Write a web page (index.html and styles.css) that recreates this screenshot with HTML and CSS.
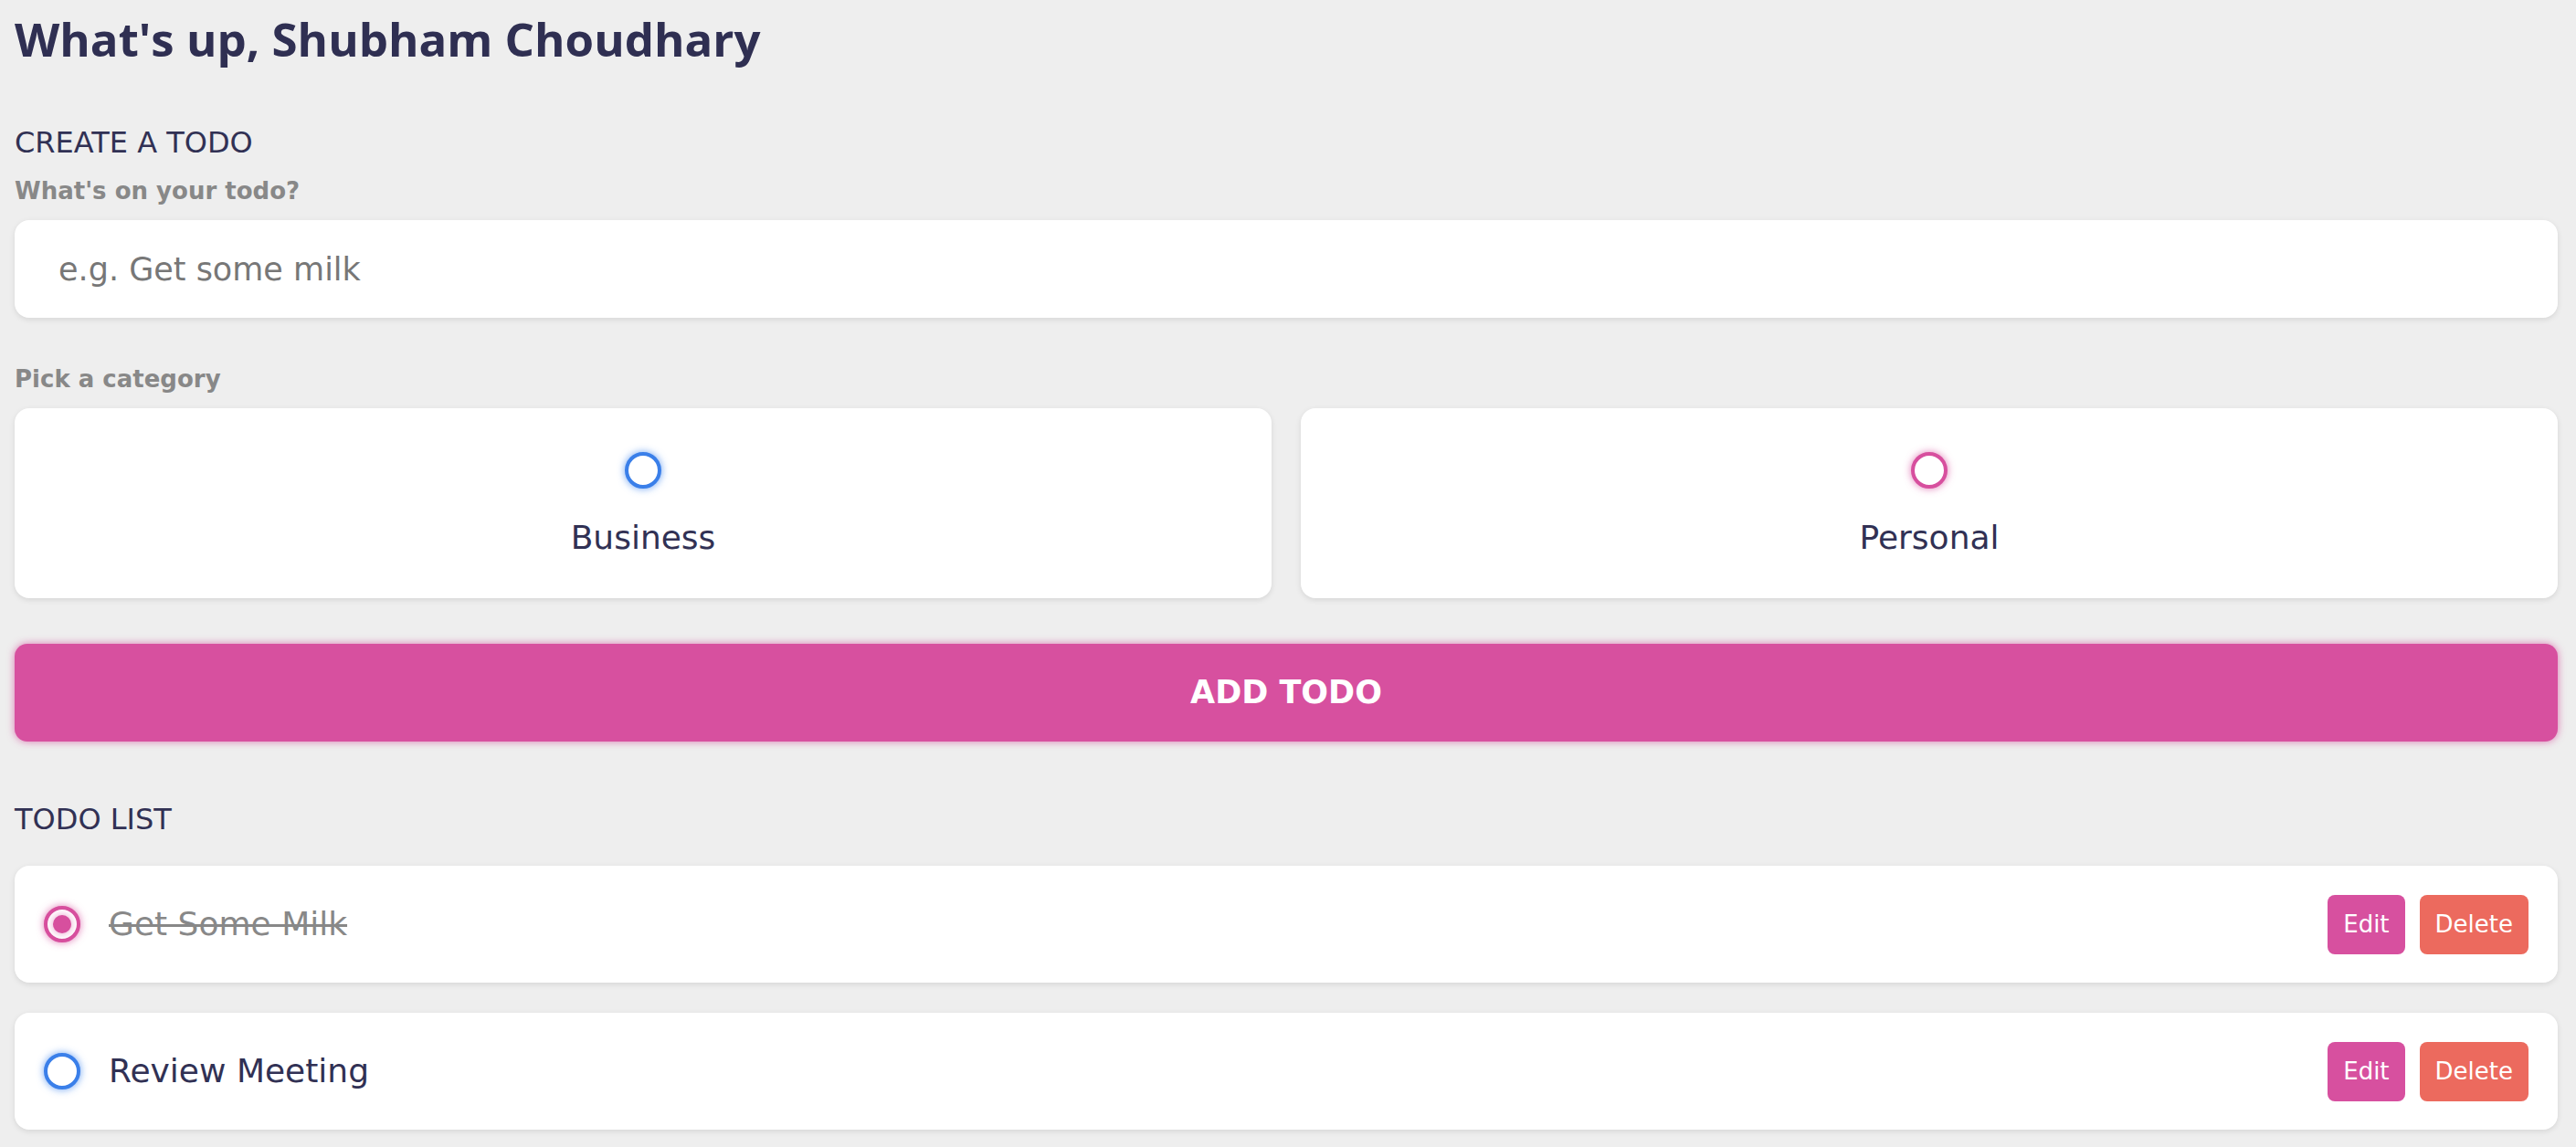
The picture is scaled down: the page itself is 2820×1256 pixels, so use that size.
FILE: index.html
```html
<!DOCTYPE html>
<html lang="en">
<head>
<meta charset="utf-8">
<title>Todo</title>
<link rel="stylesheet" href="styles.css">
</head>
<body>
<main class="app">
  <section class="greeting">
    <h2 class="title">What's up, Shubham Choudhary</h2>
  </section>

  <section class="create-todo">
    <h3 class="section-title">CREATE A TODO</h3>
    <form class="create-form">
      <h4 class="label label-todo">What's on your todo?</h4>
      <input class="todo-input" type="text" placeholder="e.g. Get some milk">
      <h4 class="label label-cat">Pick a category</h4>
      <div class="options">
        <label class="option">
          <span class="bubble business"></span>
          <span class="option-name">Business</span>
        </label>
        <label class="option">
          <span class="bubble personal"></span>
          <span class="option-name">Personal</span>
        </label>
      </div>
      <button type="button" class="add-btn">Add todo</button>
    </form>
  </section>

  <section class="todo-list">
    <h3 class="section-title list-title">TODO LIST</h3>
    <div class="list">
      <div class="todo-item done">
        <span class="bubble personal checked"></span>
        <span class="todo-content">Get Some Milk</span>
        <div class="actions">
          <button type="button" class="btn edit">Edit</button>
          <button type="button" class="btn delete">Delete</button>
        </div>
      </div>
      <div class="todo-item">
        <span class="bubble business"></span>
        <span class="todo-content">Review Meeting</span>
        <div class="actions">
          <button type="button" class="btn edit">Edit</button>
          <button type="button" class="btn delete">Delete</button>
        </div>
      </div>
    </div>
  </section>
</main>
</body>
</html>
```

FILE: styles.css
```css
* {
  margin: 0;
  padding: 0;
  box-sizing: border-box;
}

html, body {
  background: #eeeeee;
}

body {
  font-family: "DejaVu Sans", sans-serif;
  color: #313154;
}

.app {
  padding: 0 20px 0 16px;
}

.greeting {
  padding-top: 16px;
}

.title {
  font-family: "Open Sans", sans-serif;
  font-weight: 700;
  font-size: 51px;
  line-height: 52px;
  color: #2f2f52;
}

.section-title {
  font-weight: 400;
  font-size: 32px;
  line-height: 32px;
  color: #313154;
}

.create-todo {
  margin-top: 72px;
}

.label {
  font-weight: 700;
  font-size: 26px;
  line-height: 26px;
  color: #888888;
}

.label-todo {
  margin-top: 24px;
}

.todo-input {
  display: block;
  width: 100%;
  height: 107px;
  margin-top: 19px;
  padding: 0 48px;
  border: none;
  outline: none;
  background: #ffffff;
  border-radius: 16px;
  box-shadow: 0 2px 6px rgba(0, 0, 0, 0.1);
  font-family: "DejaVu Sans", sans-serif;
  font-size: 35px;
  color: #313154;
}

.todo-input::placeholder {
  color: #777777;
}

.label-cat {
  margin-top: 54px;
}

.options {
  display: grid;
  grid-template-columns: 1fr 1fr;
  gap: 32px;
  margin-top: 19px;
}

.option {
  display: flex;
  flex-direction: column;
  align-items: center;
  background: #ffffff;
  border-radius: 16px;
  box-shadow: 0 2px 6px rgba(0, 0, 0, 0.1);
  padding: 48px 0;
}

.option-name {
  margin-top: 36px;
  font-size: 36px;
  line-height: 36px;
  color: #313154;
}

.bubble {
  display: flex;
  align-items: center;
  justify-content: center;
  width: 40px;
  height: 40px;
  border-radius: 50%;
  border: 4px solid #3a7fe9;
  box-shadow: 0 0 8px rgba(58, 130, 238, 0.75);
  background: #ffffff;
  flex: none;
}

.bubble.personal {
  border-color: #d74f9e;
  box-shadow: 0 0 8px rgba(215, 79, 158, 0.75);
}

.bubble.checked::after {
  content: "";
  display: block;
  width: 20px;
  height: 20px;
  border-radius: 50%;
  background: #d74f9e;
  box-shadow: 0 0 8px rgba(215, 79, 158, 0.6);
}

.add-btn {
  display: block;
  width: 100%;
  height: 107px;
  margin-top: 50px;
  border: none;
  border-radius: 14px;
  background: #d7509f;
  box-shadow: 0 0 8px rgba(215, 79, 158, 0.75);
  color: #ffffff;
  font-family: "DejaVu Sans", sans-serif;
  font-weight: 700;
  font-size: 35px;
  line-height: 35px;
  text-transform: uppercase;
}

.todo-list {
  margin-top: 69px;
}

.list {
  margin-top: 35px;
}

.todo-item {
  display: flex;
  align-items: center;
  height: 128px;
  padding: 0 32px;
  margin-bottom: 33px;
  background: #ffffff;
  border-radius: 16px;
  box-shadow: 0 2px 6px rgba(0, 0, 0, 0.1);
}

.todo-content {
  flex: 1 1 0%;
  margin-left: 31px;
  font-size: 36px;
  line-height: 36px;
  color: #313154;
}

.todo-item.done .todo-content {
  color: #888888;
  text-decoration: line-through;
  text-decoration-thickness: 3px;
}

.actions {
  display: flex;
  align-items: center;
  gap: 16px;
}

.btn {
  display: block;
  height: 65px;
  padding: 0 17px;
  border: none;
  border-radius: 8px;
  color: #ffffff;
  font-family: "DejaVu Sans", sans-serif;
  font-size: 26px;
  line-height: 26px;
}

.btn.edit {
  background: #d7509f;
}

.btn.delete {
  background: #ec6a5e;
}
```
